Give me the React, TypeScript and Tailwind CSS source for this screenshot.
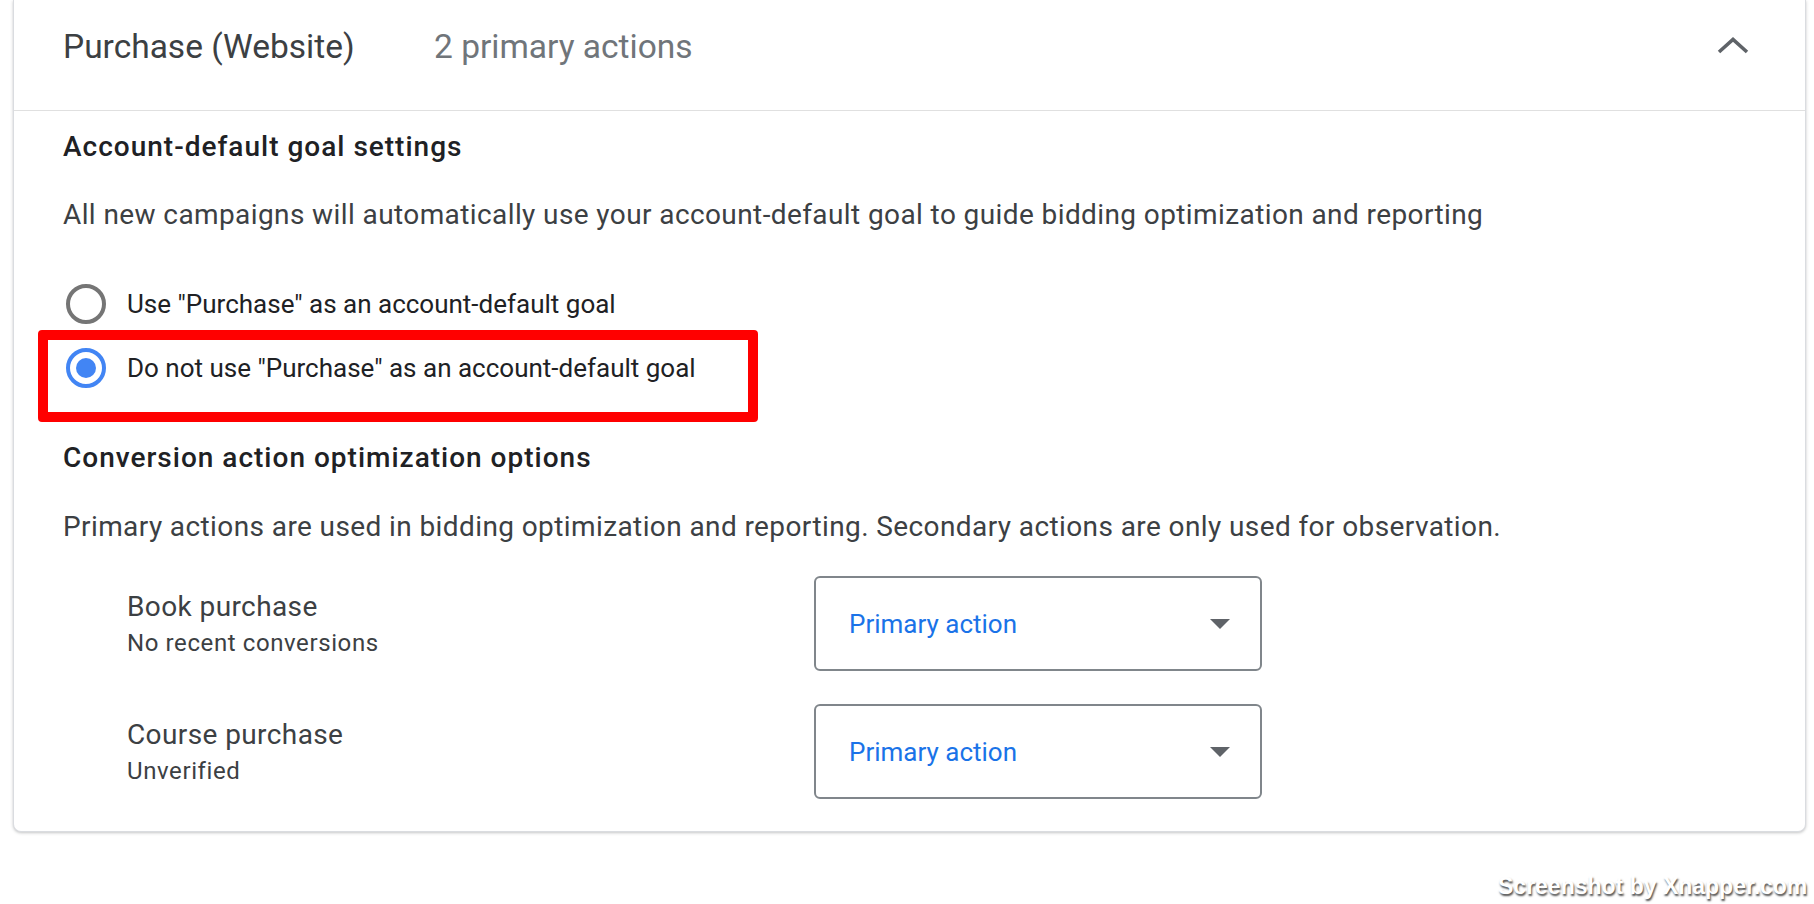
import React from "react";

const ChevronUp = () => (
  <svg width="32" height="17" viewBox="0 0 32 17" fill="none">
    <polyline points="2,15 16,2.5 30,15" stroke="#5f6368" strokeWidth="3.6" />
  </svg>
);

const CaretDown = () => (
  <svg width="20" height="10" viewBox="0 0 20 10">
    <polygon points="0,0 20,0 10,10" fill="#5f6368" />
  </svg>
);

const Radio = ({ checked, label, children }: { checked?: boolean; label: string; children?: React.ReactNode }) => (
  <div className="relative flex h-[64px] items-center">
    <span
      className={
        checked
          ? "ml-[3px] flex h-[40px] w-[40px] items-center justify-center rounded-full border-4 border-[#4285f4]"
          : "ml-[3px] flex h-[40px] w-[40px] items-center justify-center rounded-full border-4 border-[#757575]"
      }
    >
      {checked && <span className="h-[20px] w-[20px] rounded-full bg-[#4285f4]" />}
    </span>
    <span className="ml-[21px] text-[26px] leading-[36px] text-[#202124]">{label}</span>
    {children}
  </div>
);

const ActionRow = ({ name, status }: { name: string; status: string }) => (
  <div className="ml-[64px] flex">
    <div className="w-[687px] pt-[13px]">
      <div className="text-[28px] leading-[36px] tracking-[0.4px] text-[#3c4043]">{name}</div>
      <div className="text-[24px] leading-[37px] tracking-[0.025em] text-[#3c4043]">{status}</div>
    </div>
    <div className="flex h-[95px] w-[448px] items-center justify-between rounded-[6px] border-2 border-[#80868b] pl-[33px] pr-[30px]">
      <span className="text-[26px] leading-[36px] text-[#1a73e8]">Primary action</span>
      <CaretDown />
    </div>
  </div>
);

export default function App() {
  return (
    <div className="relative h-[904px] w-full overflow-hidden bg-white font-['Roboto',sans-serif]">
      <div className="ml-[13px] mr-[8px] rounded-b-[8px] border border-t-0 border-[#dadce0] bg-white shadow-[0_1px_3px_rgba(60,64,67,0.3)]">
        {/* header */}
        <div className="flex h-[111px] items-start border-b border-[#e0e0e0] pl-[49px] pt-[26px]">
          <div className="w-[371px] text-[33.5px] leading-[42px] text-[#3c4043]">Purchase (Website)</div>
          <div className="text-[33.5px] leading-[42px] text-[#70757a]">2 primary actions</div>
          <div className="ml-auto mr-[56px] mt-[11px]">
            <ChevronUp />
          </div>
        </div>

        {/* body */}
        <div className="pb-[32px] pl-[49px] pt-[18px]">
          <h3 className="text-[28px] font-medium leading-[36px] tracking-[1px] text-[#202124]">Account-default goal settings</h3>
          <p className="mt-[32px] text-[28px] leading-[36px] tracking-[0.4px] text-[#3c4043]">
            All new campaigns will automatically use your account-default goal to guide bidding optimization and reporting
          </p>

          <div className="mt-[39px]">
            <Radio label={'Use "Purchase" as an account-default goal'} />
            <Radio checked label={'Do not use "Purchase" as an account-default goal'}>
              <div className="absolute left-[-25px] top-[-6px] h-[92px] w-[720px] rounded-[4px] border-[10px] border-[#ff0000]" />
            </Radio>
          </div>

          <h3 className="mt-[40px] text-[28px] font-medium leading-[36px] tracking-[1px] text-[#202124]">
            Conversion action optimization options
          </h3>
          <p className="mt-[33px] text-[28px] leading-[36px] tracking-[0.4px] text-[#3c4043]">
            Primary actions are used in bidding optimization and reporting. Secondary actions are only used for observation.
          </p>

          <div className="mt-[31px] flex flex-col gap-[33px]">
            <ActionRow name="Book purchase" status="No recent conversions" />
            <ActionRow name="Course purchase" status="Unverified" />
          </div>
        </div>
      </div>

      <div className="absolute left-[1498px] top-[872px] whitespace-nowrap font-['Liberation_Sans',sans-serif] text-[23px] font-bold leading-[28px] text-white [text-shadow:1px_2px_2px_rgba(0,0,0,0.7)]">
        Screenshot by Xnapper.com
      </div>
    </div>
  );
}
